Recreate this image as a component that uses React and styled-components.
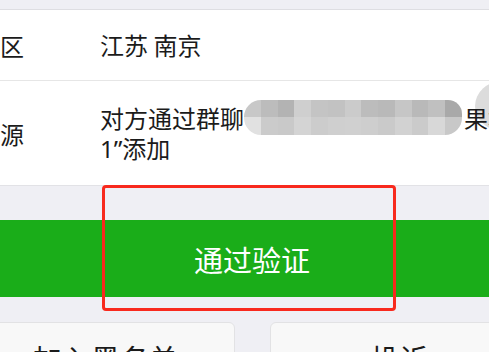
import styled, { createGlobalStyle } from "styled-components";

const GlobalStyle = createGlobalStyle`
  html, body {
    margin: 0;
    padding: 0;
    background: #efeff4;
    overflow: hidden;
    font-family: "Noto Sans CJK SC", "Noto Sans", sans-serif;
  }
`;

const Page = styled.div`
  width: 552px;
  margin-left: -24px;
  height: 352px;
  position: relative;
`;

const TopBand = styled.div`
  height: 9px;
  border-bottom: 1px solid #dedee2;
`;

const Section = styled.div`
  background: #fff;
  border-bottom: 1px solid #e2e2e6;
`;

const Row = styled.div`
  display: flex;
  align-items: center;
  height: ${(p) => p.h}px;
  position: relative;
  overflow: hidden;
  border-top: ${(p) => (p.divider ? "1px solid #e6e6e6" : "none")};
`;

const Label = styled.div`
  width: 124px;
  flex-shrink: 0;
  font-size: 24px;
  color: #1b1b1b;
`;

const Value = styled.div`
  font-size: 24px;
  line-height: 30px;
  color: #1b1b1b;
  white-space: nowrap;
  position: relative;
  z-index: 1;
`;

const Latin = styled.span`
  font-family: "Noto Sans", sans-serif;
`;

const Mosaic = styled.span`
  display: inline-grid;
  grid-template-columns: repeat(13, 1fr);
  grid-template-rows: 17px 18px;
  width: 218px;
  height: 35px;
  margin: -3px 2px -2px 0;
  vertical-align: top;
  border-radius: 17px 14px 17px 17px;
  overflow: hidden;
`;

const Cell = styled.span`
  background: ${(p) => p.c};
`;

const Blob = styled.div`
  position: absolute;
  left: 499px;
  top: 0px;
  width: 56px;
  height: 50px;
  border-radius: 50%;
  background: #dcdcdc;
  z-index: 0;
`;

const Actions = styled.div`
  padding: 34px 0 25px;
`;

const GreenButton = styled.div`
  height: 77px;
  background: #1aad19;
  color: #fff;
  font-size: 29px;
  display: flex;
  align-items: center;
  justify-content: center;
`;

const Highlight = styled.div`
  position: absolute;
  left: 126px;
  top: 185px;
  width: 288px;
  height: 120px;
  border: 3px solid #f8291d;
  border-radius: 4px;
`;

const ButtonRow = styled.div`
  display: grid;
  grid-template-columns: 259px 259px;
  column-gap: 35px;
`;

const GrayButton = styled.div`
  height: 60px;
  background: #f8f8f8;
  border: 1px solid #e2e2e4;
  border-radius: 6px;
  font-size: 29px;
  color: #1b1b1b;
  display: flex;
  justify-content: center;
  padding-top: 14px;
  box-sizing: border-box;
`;

const top = ["#c8c8c8", "#bcbcbc", "#b3b3b3", "#cfcfcf", "#c4c4c4", "#c2c2c2", "#cbcbcb", "#bcbcbc", "#b9b9b9", "#c6c6c6", "#b9b9b9", "#c0c0c0", "#a9a9a9"];
const bottom = ["#e1e1e1", "#cbcbcb", "#c9c9c9", "#d4d4d4", "#cccccc", "#cfcfcf", "#d0d0d0", "#cecece", "#cacaca", "#d2d2d2", "#cbcbcb", "#d8d8d8", "#c8c8c8"];

export default function App() {
  return (
    <Page>
      <GlobalStyle />
      <TopBand />
      <Section>
        <Row h={70}>
          <Label>地区</Label>
          <Value>江苏 南京</Value>
        </Row>
        <Row h={104} divider>
          <Label>来源</Label>
          <Blob />
          <Value>
            对方通过群聊
            <Mosaic>
              {[...top, ...bottom].map((c, i) => (
                <Cell key={i} c={c} />
              ))}
            </Mosaic>
            果群
            <br />
            <Latin>1”</Latin>添加
          </Value>
        </Row>
      </Section>
      <Actions>
        <GreenButton>通过验证</GreenButton>
      </Actions>
      <ButtonRow>
        <GrayButton>加入黑名单</GrayButton>
        <GrayButton>投诉</GrayButton>
      </ButtonRow>
      <Highlight />
    </Page>
  );
}
